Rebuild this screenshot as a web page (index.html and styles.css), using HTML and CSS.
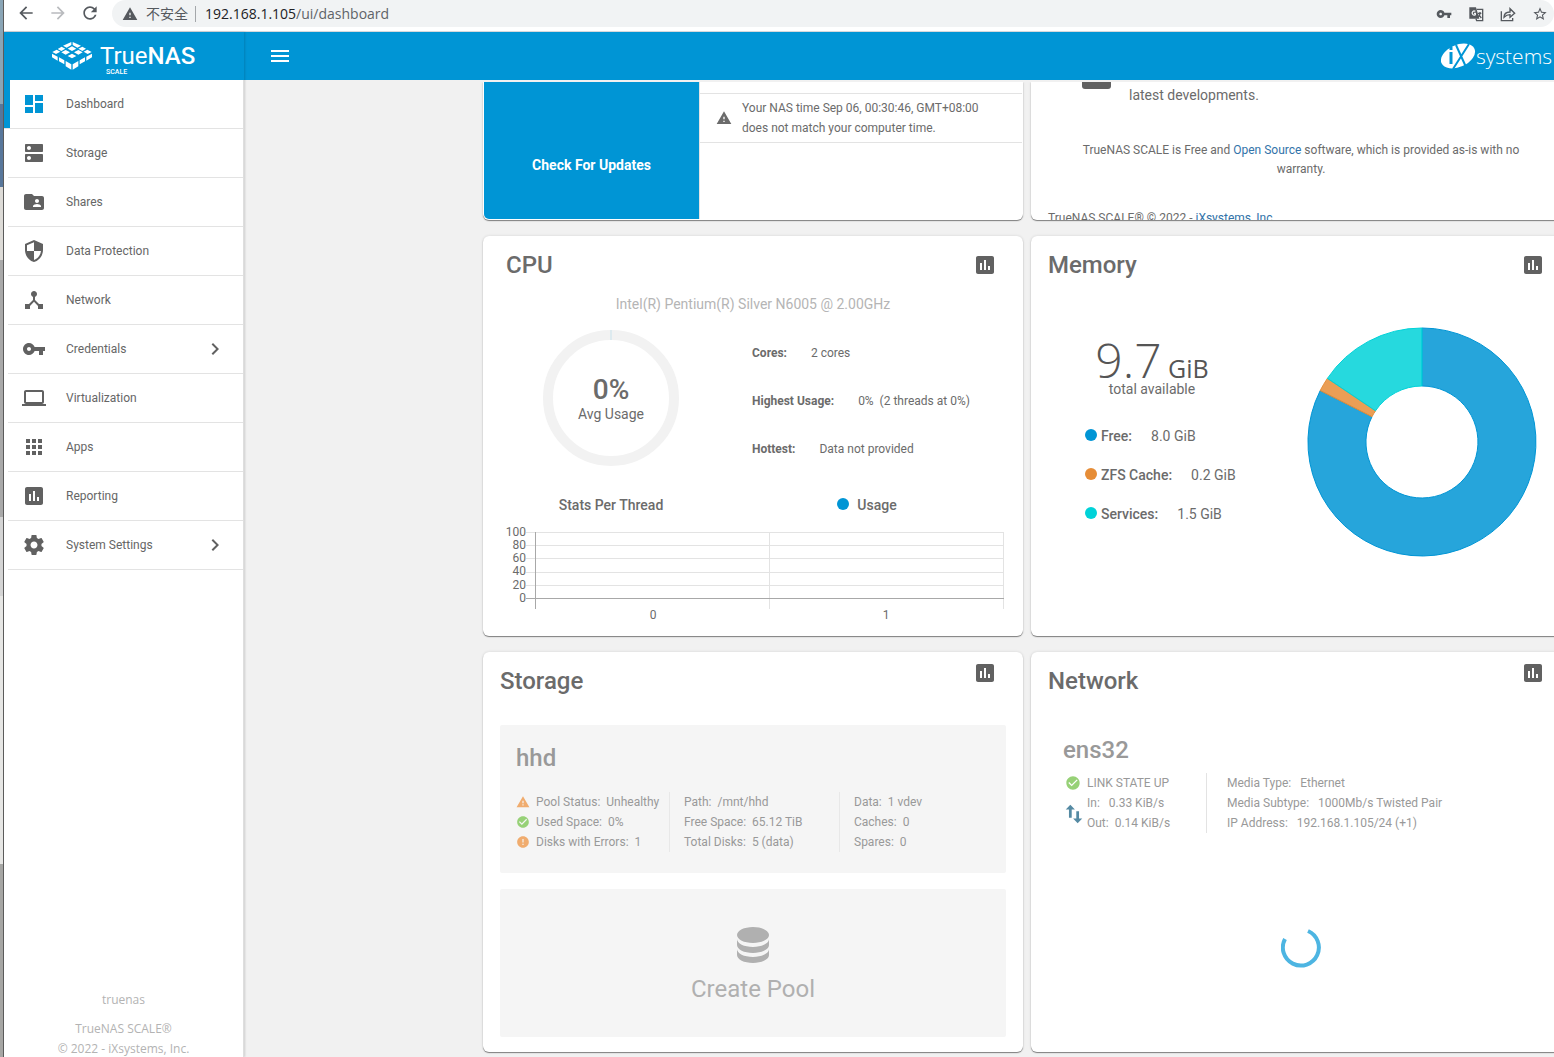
FILE: index.html
```html
<!DOCTYPE html>
<html lang="en">
<head>
    <meta charset="UTF-8">
    <meta name="viewport" content="width=device-width, initial-scale=1.0">
    <title>TrueNAS - Dashboard</title>
    <link rel="stylesheet" href="styles.css">
</head>
<body>
    <!-- Icon sprite -->
    <svg class="sprite" aria-hidden="true">
        <symbol id="dashboard" viewBox="0 0 24 24"><path d="M3 13h8V3H3v10zm0 8h8v-6H3v6zm10 0h8V11h-8v10zm0-18v6h8V3h-8z"/></symbol>
        <symbol id="storage" viewBox="0 0 24 24"><path d="M20 13H4c-.55 0-1 .45-1 1v6c0 .55.45 1 1 1h16c.55 0 1-.45 1-1v-6c0-.55-.45-1-1-1zM7 19c-1.1 0-2-.9-2-2s.9-2 2-2 2 .9 2 2-.9 2-2 2zM20 3H4c-.55 0-1 .45-1 1v6c0 .55.45 1 1 1h16c.55 0 1-.45 1-1V4c0-.55-.45-1-1-1zM7 9c-1.1 0-2-.9-2-2s.9-2 2-2 2 .9 2 2-.9 2-2 2z"/></symbol>
        <symbol id="shares" viewBox="0 0 24 24"><path d="M20 6h-8l-2-2H4c-1.1 0-1.99.9-1.99 2L2 18c0 1.1.9 2 2 2h16c1.1 0 2-.9 2-2V8c0-1.1-.9-2-2-2zm-5 3c1.1 0 2 .9 2 2s-.9 2-2 2-2-.9-2-2 .9-2 2-2zm4 8h-8v-1c0-1.33 2.67-2 4-2s4 .67 4 2v1z"/></symbol>
        <symbol id="security" viewBox="0 0 24 24"><path d="M12 1L3 5v6c0 5.55 3.84 10.74 9 12 5.16-1.26 9-6.45 9-12V5l-9-4zm0 10.99h7c-.53 4.12-3.28 7.79-7 8.94V12H5V6.3l7-3.11v8.8z"/></symbol>
        <symbol id="hub" viewBox="0 0 24 24"><path d="M17 16l-4-4V8.82C14.16 8.4 15 7.3 15 6c0-1.66-1.34-3-3-3S9 4.34 9 6c0 1.3.84 2.4 2 2.82V12l-4 4H3v5h5v-3.05l4-4.2 4 4.2V21h5v-5h-4z"/></symbol>
        <symbol id="key" viewBox="0 0 24 24"><path d="M12.65 10C11.83 7.67 9.61 6 7 6c-3.31 0-6 2.69-6 6s2.69 6 6 6c2.61 0 4.83-1.67 5.65-4H17v4h4v-4h2v-4H12.65zM7 14c-1.1 0-2-.9-2-2s.9-2 2-2 2 .9 2 2-.9 2-2 2z"/></symbol>
        <symbol id="laptop" viewBox="0 0 24 24"><path d="M20 18c1.1 0 1.99-.9 1.99-2L22 6c0-1.1-.9-2-2-2H4c-1.1 0-2 .9-2 2v10c0 1.1.9 2 2 2H0v2h24v-2h-4zM4 6h16v10H4V6z"/></symbol>
        <symbol id="apps" viewBox="0 0 24 24"><path d="M4 8h4V4H4v4zm6 12h4v-4h-4v4zm-6 0h4v-4H4v4zm0-6h4v-4H4v4zm6 0h4v-4h-4v4zm6-10v4h4V4h-4zm-6 4h4V4h-4v4zm6 6h4v-4h-4v4zm0 6h4v-4h-4v4z"/></symbol>
        <symbol id="chart" viewBox="0 0 24 24"><path d="M19 3H5c-1.1 0-2 .9-2 2v14c0 1.1.9 2 2 2h14c1.1 0 2-.9 2-2V5c0-1.1-.9-2-2-2zM9 17H7v-7h2v7zm4 0h-2V7h2v10zm4 0h-2v-4h2v4z"/></symbol>
        <symbol id="settings" viewBox="0 0 24 24"><path d="M19.43 12.98c.04-.32.07-.64.07-.98s-.03-.66-.07-.98l2.11-1.65c.19-.15.24-.42.12-.64l-2-3.46c-.12-.22-.39-.3-.61-.22l-2.49 1c-.52-.4-1.08-.73-1.69-.98l-.38-2.65C14.46 2.18 14.25 2 14 2h-4c-.25 0-.46.18-.49.42l-.38 2.65c-.61.25-1.17.59-1.69.98l-2.49-1c-.23-.09-.49 0-.61.22l-2 3.46c-.13.22-.07.49.12.64l2.11 1.65c-.04.32-.07.65-.07.98s.03.66.07.98l-2.11 1.65c-.19.15-.24.42-.12.64l2 3.46c.12.22.39.3.61.22l2.49-1c.52.4 1.08.73 1.69.98l.38 2.65c.03.24.24.42.49.42h4c.25 0 .46-.18.49-.42l.38-2.65c.61-.25 1.17-.59 1.69-.98l2.49 1c.23.09.49 0 .61-.22l2-3.46c.12-.22.07-.49-.12-.64l-2.11-1.65zM12 15.5c-1.93 0-3.5-1.57-3.5-3.5s1.57-3.5 3.5-3.5 3.5 1.57 3.5 3.5-1.57 3.5-3.5 3.5z"/></symbol>
        <symbol id="chevron" viewBox="0 0 24 24"><path d="M10 6L8.59 7.41 13.17 12l-4.58 4.59L10 18l6-6z"/></symbol>
        <symbol id="menu" viewBox="0 0 24 24"><path d="M3 18h18v-2H3v2zm0-5h18v-2H3v2zm0-7v2h18V6H3z"/></symbol>
        <symbol id="warning" viewBox="0 0 24 24"><path d="M1 21h22L12 2 1 21zm12-3h-2v-2h2v2zm0-4h-2v-4h2v4z"/></symbol>
        <symbol id="check" viewBox="0 0 24 24"><path d="M12 2C6.48 2 2 6.48 2 12s4.48 10 10 10 10-4.48 10-10S17.52 2 12 2zm-2 15l-5-5 1.41-1.41L10 14.17l7.59-7.59L19 8l-9 9z"/></symbol>
        <symbol id="error" viewBox="0 0 24 24"><path d="M12 2C6.48 2 2 6.48 2 12s4.48 10 10 10 10-4.48 10-10S17.52 2 12 2zm1 15h-2v-2h2v2zm0-4h-2V7h2v6z"/></symbol>
        <symbol id="database" viewBox="0 0 24 24"><path d="M12 3C7.58 3 4 4.79 4 7s3.58 4 8 4 8-1.79 8-4-3.58-4-8-4M4 9v3c0 2.210 3.58 4 8 4s8-1.790 8-4V9c0 2.210-3.58 4-8 4s-8-1.790-8-4m0 5v3c0 2.210 3.58 4 8 4s8-1.790 8-4v-3c0 2.210-3.58 4-8 4s-8-1.790-8-4z"/></symbol>
        <symbol id="arrow" viewBox="0 0 24 24"><path d="M20 11H7.83l5.59-5.59L12 4l-8 8 8 8 1.41-1.41L7.83 13H20v-2z"/></symbol>
        <symbol id="reload" viewBox="0 0 24 24"><path d="M17.65 6.35C16.2 4.9 14.21 4 12 4c-4.42 0-7.99 3.58-7.99 8s3.57 8 7.99 8c3.73 0 6.84-2.550 7.73-6h-2.080c-.82 2.330-3.040 4-5.650 4-3.310 0-6-2.690-6-6s2.690-6 6-6c1.660 0 3.140.69 4.220 1.780L13 11h7V4l-2.350 2.350z"/></symbol>
        <symbol id="star" viewBox="0 0 24 24"><path d="M22 9.24l-7.19-.62L12 2 9.190 8.630 2 9.240l5.460 4.730L5.820 21 12 17.270 18.180 21l-1.630-7.030L22 9.240zM12 15.400l-3.760 2.270 1-4.280-3.320-2.880 4.380-.38L12 6.100l1.710 4.040 4.380.38-3.320 2.880 1 4.280L12 15.400z"/></symbol>
        <symbol id="share" viewBox="0 0 24 24"><path d="M2 8v14h17v-4M6 17c0-6 4-8 9-8V4l7 7-7 6v-4c-4 0-6 1-9 4z" fill="none" stroke="currentColor" stroke-width="2"/></symbol>
        <symbol id="translate" viewBox="0 0 24 24">
            <path d="M2 2h10l5 17H2z"/>
            <path d="M13 5h9v17h-9l-1-3M15 11h5m-2-2v2c0 3-2 5-3 6m1-4 4 5" fill="none" stroke="currentColor" stroke-width="2"/>
            <path d="M11 8a3 3 0 1 0 0 5v-2H9" fill="none" stroke="#f1f3f4" stroke-width="2"/>
        </symbol>
        <symbol id="updown" viewBox="0 0 24 24"><path d="M8 2l5 5H9.500v9h-3V7H3zM16 22l-5-5h3.500V9h3v8H21z"/></symbol>
    </svg>

    <div class="desktop"></div>

    <div class="browser">
        <div class="toolbar">
            <button class="tool" aria-label="Back"><svg><use href="#arrow"/></svg></button>
            <button class="tool forward" aria-label="Forward" disabled><svg><use href="#arrow"/></svg></button>
            <button class="tool" aria-label="Reload"><svg><use href="#reload"/></svg></button>
            <div class="address">
                <svg class="unsafe"><use href="#warning"/></svg>
                <span class="unsafe-text" lang="zh">不安全</span>
                <span class="url">192.168.1.105<span>/ui/dashboard</span></span>
                <div class="address-actions">
                    <button aria-label="Passwords"><svg><use href="#key"/></svg></button>
                    <button aria-label="Translate"><svg><use href="#translate"/></svg></button>
                    <button aria-label="Share"><svg><use href="#share"/></svg></button>
                    <button aria-label="Bookmark"><svg><use href="#star"/></svg></button>
                </div>
            </div>
        </div>

        <div class="app">
            <aside class="sidebar">
                <a class="brand" href="#" aria-label="TrueNAS SCALE">
                    <svg class="brand-mark" viewBox="0 0 120 84">
                        <g fill="#fff">
                            <path d="M58 0v9l-14 8-11-6zM62 0v9l14 8 11-6zM60 13l13 7-13 7-13-7zM29 14l11 6-12 7-11-6zM91 14l11 6-11 7-12-7zM41 24l13 7-13 7-13-7zM79 24l13 7-13 7-13-7zM60 35l13 7-13 7-13-7zM14 23l11 6-13 7-11-6zM106 23l13 7-12 6-12-7z"/>
                            <path d="M0 35l17 9v12L0 46zM21 46l16 9v12l-16-9zM41 57l17 10v16l-17-10zM120 35l-17 9v12l17-10zM99 46l-16 9v12l16-9zM79 57L62 67v16l17-10z"/>
                        </g>
                    </svg>
                    <span class="brand-text">
                        <span class="brand-name">True<b>NAS</b></span>
                        <span class="brand-edition">SCALE</span>
                    </span>
                </a>

                <nav>
                    <ul class="menu">
                        <li class="active"><a href="#"><svg><use href="#dashboard"/></svg>Dashboard</a></li>
                        <li><a href="#"><svg><use href="#storage"/></svg>Storage</a></li>
                        <li><a href="#"><svg><use href="#shares"/></svg>Shares</a></li>
                        <li><a href="#"><svg><use href="#security"/></svg>Data Protection</a></li>
                        <li><a href="#"><svg><use href="#hub"/></svg>Network</a></li>
                        <li><a href="#"><svg><use href="#key"/></svg>Credentials<svg class="more"><use href="#chevron"/></svg></a></li>
                        <li><a href="#"><svg><use href="#laptop"/></svg>Virtualization</a></li>
                        <li><a href="#"><svg><use href="#apps"/></svg>Apps</a></li>
                        <li><a href="#"><svg><use href="#chart"/></svg>Reporting</a></li>
                        <li><a href="#"><svg><use href="#settings"/></svg>System Settings<svg class="more"><use href="#chevron"/></svg></a></li>
                    </ul>
                </nav>

                <footer class="copyright">
                    <p class="hostname">truenas</p>
                    <p>TrueNAS SCALE®</p>
                    <p>© 2022 - iXsystems, Inc.</p>
                </footer>
            </aside>

            <div class="page">
                <header class="topbar">
                    <button class="menu-toggle" aria-label="Toggle menu"><svg><use href="#menu"/></svg></button>
                    <a class="ix" href="#" aria-label="iXsystems">
                        <svg class="ix-mark" viewBox="0 0 35 28">
                            <ellipse cx="17" cy="14" rx="18" ry="11" transform="rotate(-24 17 14)" fill="#fff"/>
                            <g fill="none" stroke="#0095d5">
                                <path d="M10 10v12" stroke-width="3"/>
                                <path d="M10 5v3" stroke-width="3"/>
                                <path d="M15 3l10 22M28 2L12 27" stroke-width="2"/>
                            </g>
                        </svg>
                        <span>systems</span>
                    </a>
                </header>

                <main class="widgets">
                    <section class="card cut update">
                        <button class="update-button">Check For Updates</button>
                        <div class="notice">
                            <svg><use href="#warning"/></svg>
                            <p>Your NAS time Sep 06, 00:30:46, GMT+08:00 does not match your computer time.</p>
                        </div>
                    </section>

                    <section class="card cut help">
                        <div class="newsletter">
                            <span class="newsletter-icon"></span>
                            <p>latest developments.</p>
                        </div>
                        <p class="warranty">TrueNAS SCALE is Free and <a href="#">Open Source</a> software, which is provided as-is with no warranty.</p>
                        <p class="help-copy">TrueNAS SCALE® © 2022 - <a href="#">iXsystems, Inc</a>.</p>
                    </section>

                    <section class="card cpu">
                        <div class="card-head">
                            <h2>CPU</h2>
                            <button class="report" aria-label="CPU report"><svg><use href="#chart"/></svg></button>
                        </div>
                        <p class="cpu-model">Intel(R) Pentium(R) Silver N6005 @ 2.00GHz</p>
                        <div class="halves">
                            <div class="gauge">
                                <svg viewBox="0 0 138 138">
                                    <circle cx="69" cy="69" r="63" fill="none" stroke="#f2f2f2" stroke-width="10"/>
                                    <path d="M69 1v10" stroke="#c8e2ec"/>
                                </svg>
                                <div class="gauge-text"><strong>0%</strong><span>Avg Usage</span></div>
                            </div>
                            <ul class="cpu-facts">
                                <li><b>Cores:</b>2 cores</li>
                                <li><b>Highest Usage:</b>0% &nbsp;(2 threads at 0%)</li>
                                <li><b>Hottest:</b>Data not provided</li>
                            </ul>
                        </div>
                        <div class="halves legend">
                            <span>Stats Per Thread</span>
                            <span><i class="dot blue"></i>Usage</span>
                        </div>
                        <svg class="threads" viewBox="0 0 504 100">
                            <g stroke="#e3e3e3" shape-rendering="crispEdges">
                                <path d="M23 7.500h478M23 20.500h478M23 33.500h478M23 47.500h478M23 60.500h478"/>
                                <path d="M266.500 7v77M500.500 7v77"/>
                                <path d="M23 73.500h478M32.500 7v77" stroke="#a8a8a8"/>
                            </g>
                            <g text-anchor="end">
                                <text x="23" y="11">100</text>
                                <text x="23" y="24">80</text>
                                <text x="23" y="37">60</text>
                                <text x="23" y="50">40</text>
                                <text x="23" y="64">20</text>
                                <text x="23" y="77">0</text>
                            </g>
                            <g text-anchor="middle">
                                <text x="150" y="94">0</text>
                                <text x="383" y="94">1</text>
                            </g>
                        </svg>
                    </section>

                    <section class="card memory">
                        <div class="card-head">
                            <h2>Memory</h2>
                            <button class="report" aria-label="Memory report"><svg><use href="#chart"/></svg></button>
                        </div>
                        <div class="memory-body">
                            <div class="memory-info">
                                <p class="total"><span class="amount">9.7</span> GiB</p>
                                <p class="total-label">total available</p>
                                <ul>
                                    <li><i class="dot blue"></i><b>Free:</b>8.0 GiB</li>
                                    <li><i class="dot orange"></i><b>ZFS Cache:</b>0.2 GiB</li>
                                    <li><i class="dot cyan"></i><b>Services:</b>1.5 GiB</li>
                                </ul>
                            </div>
                            <svg class="donut" viewBox="0 0 230 230">
                                <g fill-opacity=".85">
                                    <path d="M115 1A114 114 0 1 1 13.200 63.600L65 89.700A56 56 0 1 0 115 59z" fill="#0095d5" stroke="#0095d5"/>
                                    <path d="M13.200 63.600A114 114 0 0 1 20.400 51.400L68.500 83.800A56 56 0 0 0 65 89.700z" fill="#e68d37" stroke="#e68d37"/>
                                    <path d="M20.400 51.400A114 114 0 0 1 115 1V59A56 56 0 0 0 68.500 83.800z" fill="#00d2d8" stroke="#00d2d8"/>
                                </g>
                            </svg>
                        </div>
                    </section>

                    <section class="card pools">
                        <div class="card-head high">
                            <h2>Storage</h2>
                            <button class="report" aria-label="Storage report"><svg><use href="#chart"/></svg></button>
                        </div>
                        <div class="pool">
                            <h3>hhd</h3>
                            <div class="pool-columns">
                                <ul>
                                    <li><svg class="warn"><use href="#warning"/></svg>Pool Status: &nbsp;Unhealthy</li>
                                    <li><svg class="ok"><use href="#check"/></svg>Used Space: &nbsp;0%</li>
                                    <li><svg class="warn"><use href="#error"/></svg>Disks with Errors: &nbsp;1</li>
                                </ul>
                                <ul>
                                    <li>Path: &nbsp;/mnt/hhd</li>
                                    <li>Free Space: &nbsp;65.12 TiB</li>
                                    <li>Total Disks: &nbsp;5 (data)</li>
                                </ul>
                                <ul>
                                    <li>Data: &nbsp;1 vdev</li>
                                    <li>Caches: &nbsp;0</li>
                                    <li>Spares: &nbsp;0</li>
                                </ul>
                            </div>
                        </div>
                        <button class="create-pool">
                            <svg><use href="#database"/></svg>
                            Create Pool
                        </button>
                    </section>

                    <section class="card network">
                        <div class="card-head high">
                            <h2>Network</h2>
                            <button class="report" aria-label="Network report"><svg><use href="#chart"/></svg></button>
                        </div>
                        <div class="nic">
                            <h3>ens32</h3>
                            <div class="nic-columns">
                                <div class="nic-icons">
                                    <svg class="ok"><use href="#check"/></svg>
                                    <svg class="traffic"><use href="#updown"/></svg>
                                </div>
                                <ul class="nic-state">
                                    <li>LINK STATE UP</li>
                                    <li>In: &nbsp; 0.33 KiB/s</li>
                                    <li>Out: &nbsp;0.14 KiB/s</li>
                                </ul>
                                <ul class="nic-media">
                                    <li>Media Type: &nbsp; Ethernet</li>
                                    <li>Media Subtype: &nbsp; 1000Mb/s Twisted Pair</li>
                                    <li>IP Address: &nbsp; 192.168.1.105/24 (+1)</li>
                                </ul>
                            </div>
                        </div>
                        <svg class="spinner" viewBox="0 0 40 40">
                            <path d="M27 3A18 18 0 1 1 4 11" fill="none" stroke="#4db5e2" stroke-width="4"/>
                        </svg>
                    </section>
                </main>
            </div>
        </div>
    </div>
</body>
</html>
```
FILE: styles.css
```css
* {
    box-sizing: border-box;
}

body {
    margin: 0;
    height: 100vh;
    display: flex;
    overflow: hidden;
    font-family: Roboto, "Liberation Sans", sans-serif;
    font-size: 12px;
    line-height: 20px;
    color: #6b6b6b;
}

h2, h3, p, ul {
    margin: 0;
    padding: 0;
    list-style: none;
}

a {
    color: #3273a9;
    text-decoration: none;
}

button {
    padding: 0;
    border: 0;
    background: none;
    color: inherit;
    font: inherit;
    cursor: pointer;
}

svg {
    display: block;
    flex: none;
    width: 24px;
    height: 24px;
    fill: currentColor;
}

.sprite {
    position: absolute;
    width: 0;
    height: 0;
}

/* window behind the browser */
.desktop {
    flex: none;
    width: 4px;
    border-right: 1px solid #5c5c5c;
    background: linear-gradient(#8aa5b6 104px, #58779b 104px 187px, #dddbd7 187px 260px, #a9a9a9 260px 517px, #d4d4d4 517px 596px, #e6e6e4 596px 864px, #a6a6a4 864px);
}

.browser {
    flex: 1;
    min-width: 0;
    display: flex;
    flex-direction: column;
}

/* browser toolbar */
.toolbar {
    flex: none;
    display: flex;
    align-items: flex-start;
    height: 32px;
    padding-left: 12px;
    border-bottom: 1px solid #d5d8dc;
    background: #fff;
    color: #55595e;
}

.tool {
    width: 20px;
    height: 26px;
    margin-right: 12px;
}

.tool svg {
    width: 20px;
    height: 20px;
}

.forward {
    color: #b9bbbe;
    transform: scaleX(-1);
}

.address {
    flex: 1;
    display: flex;
    align-items: center;
    height: 27px;
    padding: 0 6px 0 10px;
    border-radius: 14px;
    background: #f1f3f4;
    font-family: "Open Sans", "Noto Sans CJK SC", sans-serif;
    font-size: 14px;
}

.address svg {
    width: 16px;
    height: 16px;
}

.unsafe-text {
    margin-left: 8px;
    padding-right: 7px;
    border-right: 1px solid #a4a7aa;
    line-height: 16px;
}

.url {
    margin-left: 9px;
    color: #202124;
}

.url span {
    color: #5f6368;
}

.address-actions {
    display: flex;
    gap: 16px;
    margin-left: auto;
}

/* app shell */
.app {
    flex: 1;
    min-height: 0;
    display: flex;
}

.sidebar {
    flex: none;
    display: flex;
    flex-direction: column;
    width: 240px;
    border-right: 1px solid #dedede;
    background: #fff;
    box-shadow: 1px 0 2px rgba(0, 0, 0, 0.15);
    z-index: 1;
}

.brand {
    display: flex;
    align-items: center;
    height: 48px;
    margin-right: -1px;
    padding-left: 48px;
    background: #0095d5;
    color: #fff;
}

.brand-mark {
    width: 40px;
    height: 28px;
}

.brand-text {
    display: flex;
    flex-direction: column;
    margin-left: 8px;
    padding-top: 6px;
}

.brand-name {
    font-size: 24px;
    line-height: 26px;
}

.brand-name b {
    font-weight: 500;
}

.brand-edition {
    padding-left: 6px;
    font-size: 7px;
    line-height: 6px;
    font-weight: 500;
}

.menu a {
    display: flex;
    align-items: center;
    height: 48px;
    padding-left: 14px;
    color: #666;
}

.menu li {
    margin-left: 4px;
    border-bottom: 1px solid #e3e3e3;
}

.menu svg {
    margin-right: 20px;
    color: #616161;
}

.menu .more {
    margin: 0 16px 0 auto;
}

.menu .active {
    margin-left: 0;
}

.menu .active a {
    padding-left: 12px;
    border-left: 6px solid #0095d5;
}

.menu .active svg {
    color: #0095d5;
}

.copyright {
    display: flex;
    flex-direction: column;
    gap: 4px;
    margin-top: auto;
    font-family: "Open Sans", "Noto Sans", sans-serif;
    font-size: 12px;
    line-height: 16px;
    text-align: center;
    color: #b3b3b3;
}

.hostname {
    margin-bottom: 9px;
}

.page {
    flex: 1;
    min-width: 0;
    display: flex;
    flex-direction: column;
    background: #f1f1f1;
}

.topbar {
    flex: none;
    display: flex;
    align-items: center;
    justify-content: space-between;
    height: 48px;
    padding: 0 2px 0 24px;
    background: #0095d5;
    color: #fff;
}

.ix {
    display: flex;
    align-items: center;
    color: #fff;
    font-family: "Open Sans", sans-serif;
    font-size: 21px;
    font-weight: 300;
}

.ix-mark {
    width: 35px;
    height: 28px;
}

/* widgets */
.widgets {
    flex: 1;
    min-height: 0;
    display: grid;
    grid-template-columns: repeat(2, 540px);
    grid-template-rows: 138px 400px 400px;
    gap: 16px 8px;
    margin-top: 2px;
    padding-left: 239px;
    overflow: hidden;
}

.card {
    border-radius: 6px;
    background: #fff;
    box-shadow: 0 1px 1px rgba(0, 0, 0, 0.45), 0 0 3px rgba(0, 0, 0, 0.12);
}

.card.cut {
    border-radius: 0 0 6px 6px;
    overflow: hidden;
}

.card-head {
    display: flex;
    align-items: center;
    justify-content: space-between;
    height: 58px;
    padding: 0 26px 0 17px;
}

.card-head.high .report {
    align-self: flex-start;
    margin-top: 9px;
}

h2, h3 {
    font-size: 24px;
    line-height: 32px;
    font-weight: 500;
}

.report {
    color: #616161;
}

.update {
    display: flex;
    align-items: flex-start;
    padding: 0 1px 1px;
}

.update-button {
    align-self: stretch;
    width: 216px;
    padding-top: 28px;
    border-right: 1px solid #e3e3e3;
    border-radius: 0 0 0 5px;
    background: #0095d5;
    color: #fff;
    font-size: 14px;
    font-weight: 700;
}

.notice {
    flex: 1;
    display: flex;
    align-items: center;
    gap: 10px;
    margin-top: 11px;
    padding: 4px 24px 4px 16px;
    border: solid #e3e3e3;
    border-width: 1px 0;
}

.notice svg {
    width: 16px;
    height: 16px;
}

.newsletter {
    display: flex;
    gap: 18px;
    padding-left: 51px;
    font-size: 14px;
}

.newsletter-icon {
    width: 29px;
    height: 7px;
    border-radius: 0 0 3px 3px;
    background: #616161;
}

.newsletter p {
    padding-top: 3px;
}

.warranty {
    padding: 36px 48px 0;
    line-height: 19px;
    text-align: center;
}

.help-copy {
    padding: 29px 17px 0;
}

/* cpu */
.cpu .card-head {
    padding-left: 23px;
}

.cpu-model {
    font-size: 14px;
    text-align: center;
    color: #b5b5b5;
}

.halves {
    display: grid;
    grid-template-columns: 1fr 1fr;
    padding-right: 28px;
    margin-top: 15px;
}

.gauge {
    display: grid;
    place-items: center;
    align-self: start;
}

.gauge svg {
    width: 138px;
    height: 138px;
    grid-area: 1 / 1;
}

.gauge-text {
    grid-area: 1 / 1;
    display: flex;
    flex-direction: column;
    align-items: center;
    padding-top: 4px;
    font-size: 14px;
}

.gauge-text strong {
    font-size: 28px;
    line-height: 28px;
    font-weight: 500;
}

.cpu-facts {
    padding-left: 13px;
    line-height: 48px;
}

.cpu-facts b {
    margin-right: 24px;
}

.legend {
    margin-top: 22px;
    font-size: 14px;
    font-weight: 500;
    text-align: center;
}

.dot {
    display: inline-block;
    width: 12px;
    height: 12px;
    border-radius: 50%;
}

.legend .dot {
    margin-right: 8px;
}

.blue {
    background: #0095d5;
}

.orange {
    background: #e68d37;
}

.cyan {
    background: #00d2d8;
}

.threads {
    width: 504px;
    height: 100px;
    margin: 10px 0 0 20px;
    font-size: 12px;
}

/* memory */
.memory-body {
    display: flex;
    gap: 34px;
    padding-top: 33px;
}

.memory-info {
    flex: none;
    width: 242px;
    padding-top: 22px;
    font-size: 14px;
}

.total {
    font-family: "Open Sans", sans-serif;
    font-size: 25px;
    line-height: 22px;
    text-align: center;
    color: #555;
}

.amount {
    font-size: 48px;
    font-weight: 300;
}

.total-label {
    text-align: center;
}

.memory-info ul {
    padding: 18px 0 0 54px;
    line-height: 39px;
}

.memory-info b {
    margin: 0 19px 0 4px;
    font-weight: 500;
}

.donut {
    width: 230px;
    height: 230px;
}

/* storage */
.pool, .create-pool {
    display: block;
    width: 506px;
    height: 148px;
    margin: 15px 17px 0;
    border-radius: 2px;
    background: #f5f5f5;
    color: #999;
}

.pool {
    padding: 17px 16px;
}

h3 {
    color: #999;
}

.pool-columns {
    display: grid;
    grid-template-columns: 153px 170px 1fr;
    margin-top: 18px;
}

.pool-columns ul + ul {
    padding-left: 14px;
    border-left: 1px solid #e8e8e8;
}

.pool-columns li {
    display: flex;
    align-items: center;
    gap: 6px;
    white-space: nowrap;
}

.pool-columns svg {
    width: 14px;
    height: 14px;
}

.warn {
    color: #f0ac6e;
}

.ok {
    color: #97d177;
}

.create-pool {
    margin-top: 16px;
    font-size: 24px;
    line-height: 32px;
    color: #b0b0b0;
}

.create-pool svg {
    width: 48px;
    height: 48px;
    margin: 0 auto 4px;
}

/* network */
.nic {
    padding: 24px 32px 0;
    color: #999;
}

.nic-columns {
    display: flex;
    margin-top: 7px;
}

.nic-icons {
    width: 24px;
}

.nic-icons .ok {
    width: 16px;
    height: 16px;
    margin: 2px 0 12px 2px;
}

.nic-icons .traffic {
    width: 22px;
    height: 22px;
    color: #558aa3;
}

.nic-state {
    width: 120px;
    border-right: 1px solid #e3e3e3;
}

.nic-media {
    padding-left: 20px;
}

.spinner {
    width: 40px;
    height: 40px;
    margin: 95px auto 0;
}
```
